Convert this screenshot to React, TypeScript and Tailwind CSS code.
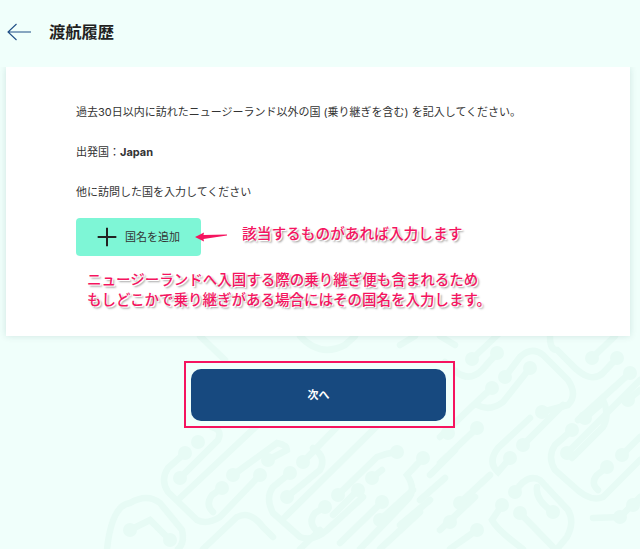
const jp = "font-['Inter','Noto_Sans_CJK_JP',sans-serif]"
const note = 'font-medium text-[#f5145f] [text-shadow:1px_1px_0_#fff,2px_2px_2px_#999]'

// chain motif traced from the page background
const links = [
  'M472 359 L507 326', 'M497 353 L482 370 Q470 382 456 372 L445 362',
  'M505 377 L520 357 Q532 346 543 355 L568 380 Q578 395 568 405 L542 412',
  'M530 368 L503 402 Q490 412 477 405', 'M492 388 L482 397 L440 437', 'M477 428 L440 463',
  'M510 458 L498 472 Q487 462 498 448 L530 418', 'M523 445 L563 405',
  'M550 337 Q550 350 557 350 L570 363 Q590 385 603 373 L617 358', 'M592 358 L615 336',
  'M630 373 L578 420', 'M603 400 Q610 415 603 427 L572 458', 'M585 418 L600 405',
  'M572 430 L555 445 Q547 457 555 470 L572 485 Q590 503 603 497 L640 460', 'M567 453 L640 380',
  'M628 400 L640 390', 'M622 455 L640 437', 'M607 467 L597 475 Q590 483 598 490',
  'M593 518 L620 517 L640 497', 'M633 505 L640 500',
  'M515 492 Q527 473 540 480 L568 510 Q575 522 567 537 L557 549', 'M537 487 Q535 500 553 512',
  'M502 505 L492 520 Q497 530 523 549', 'M520 513 L553 547', 'M460 503 L490 475', 'M440 530 L475 497', 'M477 530 L450 549',
  'M185 453 L168 468 Q160 480 168 492 L197 520 Q207 525 220 517 L260 475',
  'M180 478 L218 440 Q223 430 212 427', 'M180 498 L263 420', 'M222 488 L212 495 Q205 505 213 512',
  'M233 475 L277 443 Q287 445 287 450 L268 460', 'M303 462 L337 427',
  'M313 448 Q327 457 320 470 L287 497',
  'M290 473 L273 487 Q265 498 273 513 L300 537 Q313 542 327 530 L363 497', 'M285 517 L383 420',
  'M338 495 L377 457 Q387 453 397 452', 'M325 507 L315 513 Q307 523 318 532', 'M358 490 L333 515',
  'M372 478 L382 470', 'M382 502 L340 543', 'M380 520 L413 490', 'M423 458 L407 475 Q417 490 407 500 L360 549',
  'M107 549 Q112 505 130 503 Q147 493 160 503 L182 530 Q185 543 178 549',
  'M130 530 L150 520 L170 540', 'M203 549 L237 517 Q250 510 263 527 L273 537', 'M300 549 L320 530',
  'M430 475 L455 450', 'M420 500 L445 478', 'M400 525 L430 500', 'M380 549 L420 512',
  'M200 336 L225 360', 'M300 336 Q320 358 345 345 L355 336', 'M400 345 L415 336', 'M455 345 L440 336',
]
const dots = [
  [472, 359], [497, 353], [505, 377], [530, 368], [492, 388], [477, 428], [448, 433], [510, 458], [523, 445],
  [542, 412], [617, 358], [592, 358], [630, 373], [628, 400], [585, 418], [572, 430], [567, 453], [622, 455],
  [607, 467], [633, 505], [620, 517], [515, 492], [553, 512], [502, 505], [520, 513], [460, 503], [477, 530],
  [450, 522], [185, 453], [180, 478], [198, 442], [222, 488], [233, 475], [268, 460], [260, 475], [303, 462],
  [287, 497], [290, 473], [338, 495], [325, 507], [358, 490], [372, 478], [397, 452], [382, 502], [380, 520],
  [423, 458], [130, 530], [170, 540],
]

function Pattern() {
  return (
    <svg className="absolute inset-0 h-full w-full" viewBox="0 0 640 549" fill="none">
      <g stroke="#e7fbf5" strokeWidth={6.5} strokeLinecap="round">
        {links.map((d) => (
          <path key={d} d={d} />
        ))}
      </g>
      {dots.map(([cx, cy]) => (
        <circle key={`${cx}-${cy}`} cx={cx} cy={cy} r={7} fill="#e7fbf5" />
      ))}
    </svg>
  )
}

export default function App() {
  return (
    <div className={`relative h-[549px] w-[640px] overflow-hidden bg-[#f0fffb] ${jp}`}>
      <Pattern />

      <div className="relative">
        {/* header */}
        <header className="relative z-10 flex h-[67px] items-center bg-[#f0fffb] pb-[3px] pl-[7px]">
          <svg className="h-[18px] w-[25px]" viewBox="0 0 25 18" fill="none" stroke="#1f4e85" strokeWidth={1.1}>
            <path d="M24 9 H1 M9.5 1 L1 9 L9.5 17" />
          </svg>
          <h1 className="ml-[17px] text-[16.3px] font-bold text-[#222]">渡航履歴</h1>
        </header>

        {/* card */}
        <main className="ml-[6px] mr-[10px] h-[269px] bg-white pl-[70px] pt-[37px] text-[#333] shadow-[0_0_7px_rgba(0,80,70,0.14)]">
          <p className="text-[11px] leading-4">
            過去30日以内に訪れたニュージーランド以外の国 (乗り継ぎを含む) を記入してください。
          </p>
          <p className="mt-6 text-[11px] leading-4">
            出発国：<span className="font-bold">Japan</span>
          </p>
          <p className="mt-6 text-[11px] leading-4">他に訪問した国を入力してください</p>

          <div className="mt-[18px] flex items-center">
            <button className="flex h-[38px] w-[125px] items-center rounded-[4px] bg-[#7ef6d6] pl-[15px] text-[11px] text-[#333]">
              <svg className="mr-[2px] h-[32px] w-[32px]" viewBox="0 0 24 24" fill="none" stroke="#222" strokeWidth={1.5}>
                <path d="M5 12 H19 M12 5 V19" />
              </svg>
              国名を追加
            </button>
            <svg className="ml-[-7px] h-3 w-[34px]" viewBox="0 0 34 12">
              <path d="M1 6 L10 1.5 L9.5 4 L33 3.5 L33 4.5 L9.5 8 L10 10.5 Z" fill="#f5145f" />
            </svg>
            <span className={`mb-[6px] ml-[14px] text-[14.7px] ${note}`}>該当するものがあれば入力します</span>
          </div>

          <div className={`ml-[11px] mt-[14px] text-[14.5px] leading-[19.5px] ${note}`}>
            <p>ニュージーランドへ入国する際の乗り継ぎ便も含まれるため</p>
            <p>もしどこかで乗り継ぎがある場合にはその国名を入力します。</p>
          </div>
        </main>

        {/* next */}
        <div className="mt-[25px] flex pl-[184px]">
          <div className="border-2 border-[#f5145f] bg-[#f0fffb] pb-[5px] pl-[5px] pr-[7px] pt-[6px]">
            <button className="h-[52px] w-[255px] rounded-[10px] bg-[#17497f] text-[11px] font-bold text-white">
              次へ
            </button>
          </div>
        </div>
      </div>
    </div>
  )
}
